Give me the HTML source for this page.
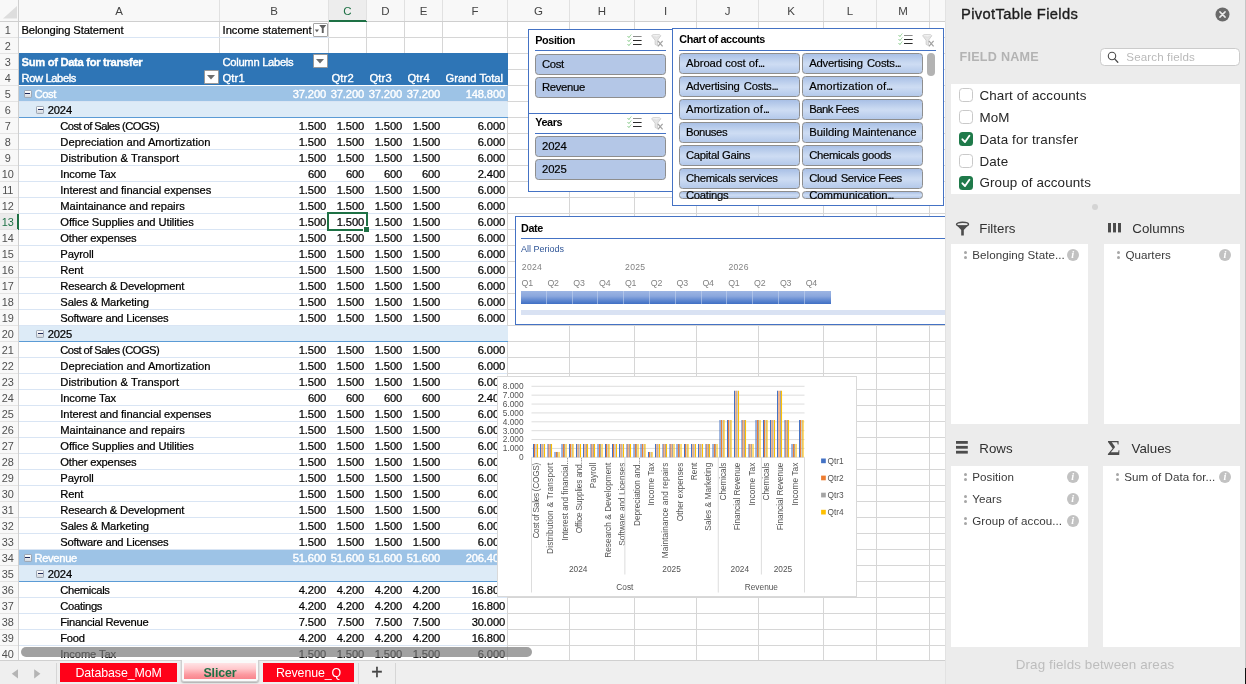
<!DOCTYPE html><html><head><meta charset="utf-8"><title>Slicer</title><style>
*{box-sizing:border-box;margin:0;padding:0}
html,body{width:1246px;height:684px;overflow:hidden;background:#fff}
body{position:relative;font-family:"Liberation Sans",sans-serif;}
.a{position:absolute}
.c{position:absolute;font-size:11.2px;line-height:16px;height:16px;white-space:nowrap;overflow:hidden;color:#000;padding-top:0px;-webkit-text-stroke:0.22px}
.r{text-align:right}
.w{color:#fff;-webkit-text-stroke:0.38px #fff}
.b{font-weight:bold}
.hl{position:absolute;height:1px;left:0}
.vl{position:absolute;width:1px;top:0}
.ch{position:absolute;top:0;height:21px;line-height:22px;font-size:11.5px;color:#444;text-align:center}
.rh{position:absolute;left:0;width:15.5px;height:16px;line-height:17px;font-size:10.9px;color:#4f4f4f;text-align:center;letter-spacing:-0.15px}
.sl{position:absolute;background:#fff;border:1px solid #4472c4}
.slt{position:absolute;font-weight:bold;font-size:10.8px;letter-spacing:-0.36px;line-height:14px;color:#000;white-space:nowrap}
.slb{position:absolute;height:20.5px;border:1px solid #8e8e8e;border-radius:3.5px;background:#b4c7e7;font-size:11.3px;line-height:18px;padding-left:6px;white-space:nowrap;overflow:hidden;color:#000;-webkit-text-stroke:0.18px}
.slg{background:linear-gradient(#a9c0e6 0%,#c9d9f1 45%,#cddcf3 55%,#b4c9ea 100%)}
.pt{position:absolute;white-space:nowrap}
.wb{position:absolute;background:#fff}
.it{position:absolute;font-size:11.6px;line-height:14px;color:#3a3a3a;white-space:nowrap;letter-spacing:0.05px}
.grip{position:absolute;width:3px;height:3px;border-radius:50%;background:#a6a6a6}
.info{position:absolute;width:12px;height:12px;border-radius:50%;background:#c2c2c2;color:#fff;font-family:"Liberation Serif",serif;font-style:italic;font-weight:bold;font-size:10.5px;line-height:12px;text-align:center}
.cb{position:absolute;left:959px;width:14px;height:14px;border-radius:3.5px;border:1px solid #c9c9c9;background:#fff}
.cbk{border:none;background:#1f7a4a}
.fl{position:absolute;left:979.5px;font-size:13.4px;line-height:16px;color:#262626;white-space:nowrap;letter-spacing:0.12px}
</style></head><body><div id="root" style="position:absolute;left:0;top:0;width:1246px;height:684px;will-change:transform;opacity:0.9999">
<div class="a" id="sheet" style="left:0;top:0;width:945px;height:660px;overflow:hidden;background:#fff">
<div class="hl" style="top:36.5px;width:945px;background:#d6d6d6"></div>
<div class="hl" style="top:52.5px;width:945px;background:#d6d6d6"></div>
<div class="hl" style="top:68.5px;width:945px;background:#d6d6d6"></div>
<div class="hl" style="top:84.5px;width:945px;background:#d6d6d6"></div>
<div class="hl" style="top:100.5px;width:945px;background:#d6d6d6"></div>
<div class="hl" style="top:116.5px;width:945px;background:#d6d6d6"></div>
<div class="hl" style="top:132.5px;width:945px;background:#d6d6d6"></div>
<div class="hl" style="top:148.5px;width:945px;background:#d6d6d6"></div>
<div class="hl" style="top:164.5px;width:945px;background:#d6d6d6"></div>
<div class="hl" style="top:180.5px;width:945px;background:#d6d6d6"></div>
<div class="hl" style="top:196.5px;width:945px;background:#d6d6d6"></div>
<div class="hl" style="top:212.5px;width:945px;background:#d6d6d6"></div>
<div class="hl" style="top:228.5px;width:945px;background:#d6d6d6"></div>
<div class="hl" style="top:244.5px;width:945px;background:#d6d6d6"></div>
<div class="hl" style="top:260.5px;width:945px;background:#d6d6d6"></div>
<div class="hl" style="top:276.5px;width:945px;background:#d6d6d6"></div>
<div class="hl" style="top:292.5px;width:945px;background:#d6d6d6"></div>
<div class="hl" style="top:308.5px;width:945px;background:#d6d6d6"></div>
<div class="hl" style="top:324.5px;width:945px;background:#d6d6d6"></div>
<div class="hl" style="top:340.5px;width:945px;background:#d6d6d6"></div>
<div class="hl" style="top:356.5px;width:945px;background:#d6d6d6"></div>
<div class="hl" style="top:372.5px;width:945px;background:#d6d6d6"></div>
<div class="hl" style="top:388.5px;width:945px;background:#d6d6d6"></div>
<div class="hl" style="top:404.5px;width:945px;background:#d6d6d6"></div>
<div class="hl" style="top:420.5px;width:945px;background:#d6d6d6"></div>
<div class="hl" style="top:436.5px;width:945px;background:#d6d6d6"></div>
<div class="hl" style="top:452.5px;width:945px;background:#d6d6d6"></div>
<div class="hl" style="top:468.5px;width:945px;background:#d6d6d6"></div>
<div class="hl" style="top:484.5px;width:945px;background:#d6d6d6"></div>
<div class="hl" style="top:500.5px;width:945px;background:#d6d6d6"></div>
<div class="hl" style="top:516.5px;width:945px;background:#d6d6d6"></div>
<div class="hl" style="top:532.5px;width:945px;background:#d6d6d6"></div>
<div class="hl" style="top:548.5px;width:945px;background:#d6d6d6"></div>
<div class="hl" style="top:564.5px;width:945px;background:#d6d6d6"></div>
<div class="hl" style="top:580.5px;width:945px;background:#d6d6d6"></div>
<div class="hl" style="top:596.5px;width:945px;background:#d6d6d6"></div>
<div class="hl" style="top:612.5px;width:945px;background:#d6d6d6"></div>
<div class="hl" style="top:628.5px;width:945px;background:#d6d6d6"></div>
<div class="hl" style="top:644.5px;width:945px;background:#d6d6d6"></div>
<div class="hl" style="top:660.5px;width:945px;background:#d6d6d6"></div>
<div class="hl" style="top:676.5px;width:945px;background:#d6d6d6"></div>
<div class="vl" style="left:219.0px;height:660px;background:#d6d6d6"></div>
<div class="vl" style="left:328.0px;height:660px;background:#d6d6d6"></div>
<div class="vl" style="left:366.0px;height:660px;background:#d6d6d6"></div>
<div class="vl" style="left:404.0px;height:660px;background:#d6d6d6"></div>
<div class="vl" style="left:442.0px;height:660px;background:#d6d6d6"></div>
<div class="vl" style="left:507.0px;height:660px;background:#d6d6d6"></div>
<div class="vl" style="left:569.0px;height:660px;background:#d6d6d6"></div>
<div class="vl" style="left:634.0px;height:660px;background:#d6d6d6"></div>
<div class="vl" style="left:696.0px;height:660px;background:#d6d6d6"></div>
<div class="vl" style="left:758.0px;height:660px;background:#d6d6d6"></div>
<div class="vl" style="left:823.0px;height:660px;background:#d6d6d6"></div>
<div class="vl" style="left:876.0px;height:660px;background:#d6d6d6"></div>
<div class="vl" style="left:929.0px;height:660px;background:#d6d6d6"></div>
<div class="vl" style="left:989.5px;height:660px;background:#d6d6d6"></div>
<div class="a" style="left:19.0px;top:53.5px;width:488.0px;height:606.5px;background:#fff"></div>
<div class="hl" style="left:19.0px;top:100.5px;width:488.0px;background:#d9e5f4"></div>
<div class="hl" style="left:19.0px;top:116.5px;width:488.0px;background:#d9e5f4"></div>
<div class="hl" style="left:19.0px;top:132.5px;width:488.0px;background:#d9e5f4"></div>
<div class="hl" style="left:19.0px;top:148.5px;width:488.0px;background:#d9e5f4"></div>
<div class="hl" style="left:19.0px;top:164.5px;width:488.0px;background:#d9e5f4"></div>
<div class="hl" style="left:19.0px;top:180.5px;width:488.0px;background:#d9e5f4"></div>
<div class="hl" style="left:19.0px;top:196.5px;width:488.0px;background:#d9e5f4"></div>
<div class="hl" style="left:19.0px;top:212.5px;width:488.0px;background:#d9e5f4"></div>
<div class="hl" style="left:19.0px;top:228.5px;width:488.0px;background:#d9e5f4"></div>
<div class="hl" style="left:19.0px;top:244.5px;width:488.0px;background:#d9e5f4"></div>
<div class="hl" style="left:19.0px;top:260.5px;width:488.0px;background:#d9e5f4"></div>
<div class="hl" style="left:19.0px;top:276.5px;width:488.0px;background:#d9e5f4"></div>
<div class="hl" style="left:19.0px;top:292.5px;width:488.0px;background:#d9e5f4"></div>
<div class="hl" style="left:19.0px;top:308.5px;width:488.0px;background:#d9e5f4"></div>
<div class="hl" style="left:19.0px;top:324.5px;width:488.0px;background:#d9e5f4"></div>
<div class="hl" style="left:19.0px;top:340.5px;width:488.0px;background:#d9e5f4"></div>
<div class="hl" style="left:19.0px;top:356.5px;width:488.0px;background:#d9e5f4"></div>
<div class="hl" style="left:19.0px;top:372.5px;width:488.0px;background:#d9e5f4"></div>
<div class="hl" style="left:19.0px;top:388.5px;width:488.0px;background:#d9e5f4"></div>
<div class="hl" style="left:19.0px;top:404.5px;width:488.0px;background:#d9e5f4"></div>
<div class="hl" style="left:19.0px;top:420.5px;width:488.0px;background:#d9e5f4"></div>
<div class="hl" style="left:19.0px;top:436.5px;width:488.0px;background:#d9e5f4"></div>
<div class="hl" style="left:19.0px;top:452.5px;width:488.0px;background:#d9e5f4"></div>
<div class="hl" style="left:19.0px;top:468.5px;width:488.0px;background:#d9e5f4"></div>
<div class="hl" style="left:19.0px;top:484.5px;width:488.0px;background:#d9e5f4"></div>
<div class="hl" style="left:19.0px;top:500.5px;width:488.0px;background:#d9e5f4"></div>
<div class="hl" style="left:19.0px;top:516.5px;width:488.0px;background:#d9e5f4"></div>
<div class="hl" style="left:19.0px;top:532.5px;width:488.0px;background:#d9e5f4"></div>
<div class="hl" style="left:19.0px;top:548.5px;width:488.0px;background:#d9e5f4"></div>
<div class="hl" style="left:19.0px;top:564.5px;width:488.0px;background:#d9e5f4"></div>
<div class="hl" style="left:19.0px;top:580.5px;width:488.0px;background:#d9e5f4"></div>
<div class="hl" style="left:19.0px;top:596.5px;width:488.0px;background:#d9e5f4"></div>
<div class="hl" style="left:19.0px;top:612.5px;width:488.0px;background:#d9e5f4"></div>
<div class="hl" style="left:19.0px;top:628.5px;width:488.0px;background:#d9e5f4"></div>
<div class="hl" style="left:19.0px;top:644.5px;width:488.0px;background:#d9e5f4"></div>
<div class="hl" style="left:19.0px;top:660.5px;width:488.0px;background:#d9e5f4"></div>
<div class="hl" style="left:19.0px;top:36.5px;width:309.5px;background:#d9e5f4"></div>
<div class="a" style="left:19.0px;top:53.0px;width:488.5px;height:32.3px;background:#2e75b6"></div>
<div class="a" style="left:19.0px;top:85.8px;width:488.5px;height:15.7px;background:#9dc3e6"></div>
<div class="a" style="left:19.0px;top:549.8px;width:488.5px;height:15.7px;background:#9dc3e6"></div>
<div class="a" style="left:19.0px;top:101.5px;width:488.5px;height:15.5px;background:#ddebf7"></div>
<div class="hl" style="left:19.0px;top:116.8px;width:488.5px;background:#5b9bd5"></div>
<div class="a" style="left:19.0px;top:325.5px;width:488.5px;height:15.5px;background:#ddebf7"></div>
<div class="hl" style="left:19.0px;top:340.8px;width:488.5px;background:#5b9bd5"></div>
<div class="a" style="left:19.0px;top:565.5px;width:488.5px;height:15.5px;background:#ddebf7"></div>
<div class="hl" style="left:19.0px;top:580.8px;width:488.5px;background:#5b9bd5"></div>
<div class="c " style="left:21.5px;top:21.5px;width:197.5px;letter-spacing:-0.10px;">Belonging Statement</div>
<div class="c " style="left:222.5px;top:21.5px;width:91.5px;letter-spacing:0.02px;">Income statement</div>
<div class="c w b" style="left:21.5px;top:53.5px;width:197.5px;letter-spacing:-0.3px;">Sum of Data for transfer</div>
<div class="c w" style="left:222.5px;top:53.5px;width:89.5px;letter-spacing:-0.29px;">Column Labels</div>
<div class="c w" style="left:21.5px;top:69.5px;width:181.5px;letter-spacing:-0.39px;">Row Labels</div>
<div class="c w" style="left:222.5px;top:69.5px;width:105.5px;letter-spacing:0.14px;">Qtr1</div>
<div class="c w" style="left:331.5px;top:69.5px;width:34.5px;letter-spacing:0.14px;">Qtr2</div>
<div class="c w" style="left:369.5px;top:69.5px;width:34.5px;letter-spacing:0.14px;">Qtr3</div>
<div class="c w" style="left:407.5px;top:69.5px;width:34.5px;letter-spacing:0.14px;">Qtr4</div>
<div class="c w" style="left:445.5px;top:69.5px;width:61.5px;letter-spacing:-0.02px;">Grand Total</div>
<div class="a" style="left:23.5px;top:89.7px;width:8px;height:8px;border:1px solid #9fa8b4;border-radius:1.2px;background:linear-gradient(#ffffff,#d4d9df)"><div class="a" style="left:0.7px;top:2.3px;width:4.6px;height:1.4px;background:#1f2a5a"></div></div>
<div class="c w" style="left:34.5px;top:85.5px;width:184.5px;letter-spacing:-0.40px;">Cost</div>
<div class="c r w" style="left:219.5px;top:85.5px;width:106.6px;letter-spacing:-0.14px;">37.200</div>
<div class="c r w" style="left:328.5px;top:85.5px;width:35.6px;letter-spacing:-0.14px;">37.200</div>
<div class="c r w" style="left:366.5px;top:85.5px;width:35.6px;letter-spacing:-0.14px;">37.200</div>
<div class="c r w" style="left:404.5px;top:85.5px;width:35.6px;letter-spacing:-0.14px;">37.200</div>
<div class="c r w" style="left:442.5px;top:85.5px;width:62.6px;letter-spacing:-0.14px;">148.800</div>
<div class="a" style="left:36.3px;top:105.5px;width:8px;height:8px;border:1px solid #9fa8b4;border-radius:1.2px;background:linear-gradient(#ffffff,#d4d9df)"><div class="a" style="left:0.7px;top:2.3px;width:4.6px;height:1.4px;background:#1f2a5a"></div></div>
<div class="c " style="left:47.7px;top:101.5px;width:171.3px;letter-spacing:-0.15px;">2024</div>
<div class="c " style="left:60.3px;top:117.5px;width:158.7px;letter-spacing:-0.56px;">Cost of Sales (COGS)</div>
<div class="c r " style="left:219.5px;top:117.5px;width:106.6px;letter-spacing:-0.13px;">1.500</div>
<div class="c r " style="left:328.5px;top:117.5px;width:35.6px;letter-spacing:-0.13px;">1.500</div>
<div class="c r " style="left:366.5px;top:117.5px;width:35.6px;letter-spacing:-0.13px;">1.500</div>
<div class="c r " style="left:404.5px;top:117.5px;width:35.6px;letter-spacing:-0.13px;">1.500</div>
<div class="c r " style="left:442.5px;top:117.5px;width:62.6px;letter-spacing:-0.13px;">6.000</div>
<div class="c " style="left:60.3px;top:341.5px;width:158.7px;letter-spacing:-0.56px;">Cost of Sales (COGS)</div>
<div class="c r " style="left:219.5px;top:341.5px;width:106.6px;letter-spacing:-0.13px;">1.500</div>
<div class="c r " style="left:328.5px;top:341.5px;width:35.6px;letter-spacing:-0.13px;">1.500</div>
<div class="c r " style="left:366.5px;top:341.5px;width:35.6px;letter-spacing:-0.13px;">1.500</div>
<div class="c r " style="left:404.5px;top:341.5px;width:35.6px;letter-spacing:-0.13px;">1.500</div>
<div class="c r " style="left:442.5px;top:341.5px;width:62.6px;letter-spacing:-0.13px;">6.000</div>
<div class="c " style="left:60.3px;top:133.5px;width:158.7px;letter-spacing:0.03px;">Depreciation and Amortization</div>
<div class="c r " style="left:219.5px;top:133.5px;width:106.6px;letter-spacing:-0.13px;">1.500</div>
<div class="c r " style="left:328.5px;top:133.5px;width:35.6px;letter-spacing:-0.13px;">1.500</div>
<div class="c r " style="left:366.5px;top:133.5px;width:35.6px;letter-spacing:-0.13px;">1.500</div>
<div class="c r " style="left:404.5px;top:133.5px;width:35.6px;letter-spacing:-0.13px;">1.500</div>
<div class="c r " style="left:442.5px;top:133.5px;width:62.6px;letter-spacing:-0.13px;">6.000</div>
<div class="c " style="left:60.3px;top:357.5px;width:158.7px;letter-spacing:0.03px;">Depreciation and Amortization</div>
<div class="c r " style="left:219.5px;top:357.5px;width:106.6px;letter-spacing:-0.13px;">1.500</div>
<div class="c r " style="left:328.5px;top:357.5px;width:35.6px;letter-spacing:-0.13px;">1.500</div>
<div class="c r " style="left:366.5px;top:357.5px;width:35.6px;letter-spacing:-0.13px;">1.500</div>
<div class="c r " style="left:404.5px;top:357.5px;width:35.6px;letter-spacing:-0.13px;">1.500</div>
<div class="c r " style="left:442.5px;top:357.5px;width:62.6px;letter-spacing:-0.13px;">6.000</div>
<div class="c " style="left:60.3px;top:149.5px;width:158.7px;letter-spacing:0.08px;">Distribution &amp; Transport</div>
<div class="c r " style="left:219.5px;top:149.5px;width:106.6px;letter-spacing:-0.13px;">1.500</div>
<div class="c r " style="left:328.5px;top:149.5px;width:35.6px;letter-spacing:-0.13px;">1.500</div>
<div class="c r " style="left:366.5px;top:149.5px;width:35.6px;letter-spacing:-0.13px;">1.500</div>
<div class="c r " style="left:404.5px;top:149.5px;width:35.6px;letter-spacing:-0.13px;">1.500</div>
<div class="c r " style="left:442.5px;top:149.5px;width:62.6px;letter-spacing:-0.13px;">6.000</div>
<div class="c " style="left:60.3px;top:373.5px;width:158.7px;letter-spacing:0.08px;">Distribution &amp; Transport</div>
<div class="c r " style="left:219.5px;top:373.5px;width:106.6px;letter-spacing:-0.13px;">1.500</div>
<div class="c r " style="left:328.5px;top:373.5px;width:35.6px;letter-spacing:-0.13px;">1.500</div>
<div class="c r " style="left:366.5px;top:373.5px;width:35.6px;letter-spacing:-0.13px;">1.500</div>
<div class="c r " style="left:404.5px;top:373.5px;width:35.6px;letter-spacing:-0.13px;">1.500</div>
<div class="c r " style="left:442.5px;top:373.5px;width:62.6px;letter-spacing:-0.13px;">6.000</div>
<div class="c " style="left:60.3px;top:165.5px;width:158.7px;letter-spacing:-0.13px;">Income Tax</div>
<div class="c r " style="left:219.5px;top:165.5px;width:106.6px;letter-spacing:-0.15px;">600</div>
<div class="c r " style="left:328.5px;top:165.5px;width:35.6px;letter-spacing:-0.15px;">600</div>
<div class="c r " style="left:366.5px;top:165.5px;width:35.6px;letter-spacing:-0.15px;">600</div>
<div class="c r " style="left:404.5px;top:165.5px;width:35.6px;letter-spacing:-0.15px;">600</div>
<div class="c r " style="left:442.5px;top:165.5px;width:62.6px;letter-spacing:-0.13px;">2.400</div>
<div class="c " style="left:60.3px;top:389.5px;width:158.7px;letter-spacing:-0.13px;">Income Tax</div>
<div class="c r " style="left:219.5px;top:389.5px;width:106.6px;letter-spacing:-0.15px;">600</div>
<div class="c r " style="left:328.5px;top:389.5px;width:35.6px;letter-spacing:-0.15px;">600</div>
<div class="c r " style="left:366.5px;top:389.5px;width:35.6px;letter-spacing:-0.15px;">600</div>
<div class="c r " style="left:404.5px;top:389.5px;width:35.6px;letter-spacing:-0.15px;">600</div>
<div class="c r " style="left:442.5px;top:389.5px;width:62.6px;letter-spacing:-0.13px;">2.400</div>
<div class="c " style="left:60.3px;top:181.5px;width:158.7px;letter-spacing:-0.11px;">Interest and financial expenses</div>
<div class="c r " style="left:219.5px;top:181.5px;width:106.6px;letter-spacing:-0.13px;">1.500</div>
<div class="c r " style="left:328.5px;top:181.5px;width:35.6px;letter-spacing:-0.13px;">1.500</div>
<div class="c r " style="left:366.5px;top:181.5px;width:35.6px;letter-spacing:-0.13px;">1.500</div>
<div class="c r " style="left:404.5px;top:181.5px;width:35.6px;letter-spacing:-0.13px;">1.500</div>
<div class="c r " style="left:442.5px;top:181.5px;width:62.6px;letter-spacing:-0.13px;">6.000</div>
<div class="c " style="left:60.3px;top:405.5px;width:158.7px;letter-spacing:-0.11px;">Interest and financial expenses</div>
<div class="c r " style="left:219.5px;top:405.5px;width:106.6px;letter-spacing:-0.13px;">1.500</div>
<div class="c r " style="left:328.5px;top:405.5px;width:35.6px;letter-spacing:-0.13px;">1.500</div>
<div class="c r " style="left:366.5px;top:405.5px;width:35.6px;letter-spacing:-0.13px;">1.500</div>
<div class="c r " style="left:404.5px;top:405.5px;width:35.6px;letter-spacing:-0.13px;">1.500</div>
<div class="c r " style="left:442.5px;top:405.5px;width:62.6px;letter-spacing:-0.13px;">6.000</div>
<div class="c " style="left:60.3px;top:197.5px;width:158.7px;letter-spacing:-0.05px;">Maintainance and repairs</div>
<div class="c r " style="left:219.5px;top:197.5px;width:106.6px;letter-spacing:-0.13px;">1.500</div>
<div class="c r " style="left:328.5px;top:197.5px;width:35.6px;letter-spacing:-0.13px;">1.500</div>
<div class="c r " style="left:366.5px;top:197.5px;width:35.6px;letter-spacing:-0.13px;">1.500</div>
<div class="c r " style="left:404.5px;top:197.5px;width:35.6px;letter-spacing:-0.13px;">1.500</div>
<div class="c r " style="left:442.5px;top:197.5px;width:62.6px;letter-spacing:-0.13px;">6.000</div>
<div class="c " style="left:60.3px;top:421.5px;width:158.7px;letter-spacing:-0.05px;">Maintainance and repairs</div>
<div class="c r " style="left:219.5px;top:421.5px;width:106.6px;letter-spacing:-0.13px;">1.500</div>
<div class="c r " style="left:328.5px;top:421.5px;width:35.6px;letter-spacing:-0.13px;">1.500</div>
<div class="c r " style="left:366.5px;top:421.5px;width:35.6px;letter-spacing:-0.13px;">1.500</div>
<div class="c r " style="left:404.5px;top:421.5px;width:35.6px;letter-spacing:-0.13px;">1.500</div>
<div class="c r " style="left:442.5px;top:421.5px;width:62.6px;letter-spacing:-0.13px;">6.000</div>
<div class="c " style="left:60.3px;top:213.5px;width:158.7px;letter-spacing:-0.09px;">Office Supplies and Utilities</div>
<div class="c r " style="left:219.5px;top:213.5px;width:106.6px;letter-spacing:-0.13px;">1.500</div>
<div class="c r " style="left:328.5px;top:213.5px;width:35.6px;letter-spacing:-0.13px;">1.500</div>
<div class="c r " style="left:366.5px;top:213.5px;width:35.6px;letter-spacing:-0.13px;">1.500</div>
<div class="c r " style="left:404.5px;top:213.5px;width:35.6px;letter-spacing:-0.13px;">1.500</div>
<div class="c r " style="left:442.5px;top:213.5px;width:62.6px;letter-spacing:-0.13px;">6.000</div>
<div class="c " style="left:60.3px;top:437.5px;width:158.7px;letter-spacing:-0.09px;">Office Supplies and Utilities</div>
<div class="c r " style="left:219.5px;top:437.5px;width:106.6px;letter-spacing:-0.13px;">1.500</div>
<div class="c r " style="left:328.5px;top:437.5px;width:35.6px;letter-spacing:-0.13px;">1.500</div>
<div class="c r " style="left:366.5px;top:437.5px;width:35.6px;letter-spacing:-0.13px;">1.500</div>
<div class="c r " style="left:404.5px;top:437.5px;width:35.6px;letter-spacing:-0.13px;">1.500</div>
<div class="c r " style="left:442.5px;top:437.5px;width:62.6px;letter-spacing:-0.13px;">6.000</div>
<div class="c " style="left:60.3px;top:229.5px;width:158.7px;letter-spacing:-0.20px;">Other expenses</div>
<div class="c r " style="left:219.5px;top:229.5px;width:106.6px;letter-spacing:-0.13px;">1.500</div>
<div class="c r " style="left:328.5px;top:229.5px;width:35.6px;letter-spacing:-0.13px;">1.500</div>
<div class="c r " style="left:366.5px;top:229.5px;width:35.6px;letter-spacing:-0.13px;">1.500</div>
<div class="c r " style="left:404.5px;top:229.5px;width:35.6px;letter-spacing:-0.13px;">1.500</div>
<div class="c r " style="left:442.5px;top:229.5px;width:62.6px;letter-spacing:-0.13px;">6.000</div>
<div class="c " style="left:60.3px;top:453.5px;width:158.7px;letter-spacing:-0.20px;">Other expenses</div>
<div class="c r " style="left:219.5px;top:453.5px;width:106.6px;letter-spacing:-0.13px;">1.500</div>
<div class="c r " style="left:328.5px;top:453.5px;width:35.6px;letter-spacing:-0.13px;">1.500</div>
<div class="c r " style="left:366.5px;top:453.5px;width:35.6px;letter-spacing:-0.13px;">1.500</div>
<div class="c r " style="left:404.5px;top:453.5px;width:35.6px;letter-spacing:-0.13px;">1.500</div>
<div class="c r " style="left:442.5px;top:453.5px;width:62.6px;letter-spacing:-0.13px;">6.000</div>
<div class="c " style="left:60.3px;top:245.5px;width:158.7px;letter-spacing:-0.12px;">Payroll</div>
<div class="c r " style="left:219.5px;top:245.5px;width:106.6px;letter-spacing:-0.13px;">1.500</div>
<div class="c r " style="left:328.5px;top:245.5px;width:35.6px;letter-spacing:-0.13px;">1.500</div>
<div class="c r " style="left:366.5px;top:245.5px;width:35.6px;letter-spacing:-0.13px;">1.500</div>
<div class="c r " style="left:404.5px;top:245.5px;width:35.6px;letter-spacing:-0.13px;">1.500</div>
<div class="c r " style="left:442.5px;top:245.5px;width:62.6px;letter-spacing:-0.13px;">6.000</div>
<div class="c " style="left:60.3px;top:469.5px;width:158.7px;letter-spacing:-0.12px;">Payroll</div>
<div class="c r " style="left:219.5px;top:469.5px;width:106.6px;letter-spacing:-0.13px;">1.500</div>
<div class="c r " style="left:328.5px;top:469.5px;width:35.6px;letter-spacing:-0.13px;">1.500</div>
<div class="c r " style="left:366.5px;top:469.5px;width:35.6px;letter-spacing:-0.13px;">1.500</div>
<div class="c r " style="left:404.5px;top:469.5px;width:35.6px;letter-spacing:-0.13px;">1.500</div>
<div class="c r " style="left:442.5px;top:469.5px;width:62.6px;letter-spacing:-0.13px;">6.000</div>
<div class="c " style="left:60.3px;top:261.5px;width:158.7px;letter-spacing:-0.21px;">Rent</div>
<div class="c r " style="left:219.5px;top:261.5px;width:106.6px;letter-spacing:-0.13px;">1.500</div>
<div class="c r " style="left:328.5px;top:261.5px;width:35.6px;letter-spacing:-0.13px;">1.500</div>
<div class="c r " style="left:366.5px;top:261.5px;width:35.6px;letter-spacing:-0.13px;">1.500</div>
<div class="c r " style="left:404.5px;top:261.5px;width:35.6px;letter-spacing:-0.13px;">1.500</div>
<div class="c r " style="left:442.5px;top:261.5px;width:62.6px;letter-spacing:-0.13px;">6.000</div>
<div class="c " style="left:60.3px;top:485.5px;width:158.7px;letter-spacing:-0.21px;">Rent</div>
<div class="c r " style="left:219.5px;top:485.5px;width:106.6px;letter-spacing:-0.13px;">1.500</div>
<div class="c r " style="left:328.5px;top:485.5px;width:35.6px;letter-spacing:-0.13px;">1.500</div>
<div class="c r " style="left:366.5px;top:485.5px;width:35.6px;letter-spacing:-0.13px;">1.500</div>
<div class="c r " style="left:404.5px;top:485.5px;width:35.6px;letter-spacing:-0.13px;">1.500</div>
<div class="c r " style="left:442.5px;top:485.5px;width:62.6px;letter-spacing:-0.13px;">6.000</div>
<div class="c " style="left:60.3px;top:277.5px;width:158.7px;letter-spacing:-0.16px;">Research &amp; Development</div>
<div class="c r " style="left:219.5px;top:277.5px;width:106.6px;letter-spacing:-0.13px;">1.500</div>
<div class="c r " style="left:328.5px;top:277.5px;width:35.6px;letter-spacing:-0.13px;">1.500</div>
<div class="c r " style="left:366.5px;top:277.5px;width:35.6px;letter-spacing:-0.13px;">1.500</div>
<div class="c r " style="left:404.5px;top:277.5px;width:35.6px;letter-spacing:-0.13px;">1.500</div>
<div class="c r " style="left:442.5px;top:277.5px;width:62.6px;letter-spacing:-0.13px;">6.000</div>
<div class="c " style="left:60.3px;top:501.5px;width:158.7px;letter-spacing:-0.16px;">Research &amp; Development</div>
<div class="c r " style="left:219.5px;top:501.5px;width:106.6px;letter-spacing:-0.13px;">1.500</div>
<div class="c r " style="left:328.5px;top:501.5px;width:35.6px;letter-spacing:-0.13px;">1.500</div>
<div class="c r " style="left:366.5px;top:501.5px;width:35.6px;letter-spacing:-0.13px;">1.500</div>
<div class="c r " style="left:404.5px;top:501.5px;width:35.6px;letter-spacing:-0.13px;">1.500</div>
<div class="c r " style="left:442.5px;top:501.5px;width:62.6px;letter-spacing:-0.13px;">6.000</div>
<div class="c " style="left:60.3px;top:293.5px;width:158.7px;letter-spacing:-0.13px;">Sales &amp; Marketing</div>
<div class="c r " style="left:219.5px;top:293.5px;width:106.6px;letter-spacing:-0.13px;">1.500</div>
<div class="c r " style="left:328.5px;top:293.5px;width:35.6px;letter-spacing:-0.13px;">1.500</div>
<div class="c r " style="left:366.5px;top:293.5px;width:35.6px;letter-spacing:-0.13px;">1.500</div>
<div class="c r " style="left:404.5px;top:293.5px;width:35.6px;letter-spacing:-0.13px;">1.500</div>
<div class="c r " style="left:442.5px;top:293.5px;width:62.6px;letter-spacing:-0.13px;">6.000</div>
<div class="c " style="left:60.3px;top:517.5px;width:158.7px;letter-spacing:-0.13px;">Sales &amp; Marketing</div>
<div class="c r " style="left:219.5px;top:517.5px;width:106.6px;letter-spacing:-0.13px;">1.500</div>
<div class="c r " style="left:328.5px;top:517.5px;width:35.6px;letter-spacing:-0.13px;">1.500</div>
<div class="c r " style="left:366.5px;top:517.5px;width:35.6px;letter-spacing:-0.13px;">1.500</div>
<div class="c r " style="left:404.5px;top:517.5px;width:35.6px;letter-spacing:-0.13px;">1.500</div>
<div class="c r " style="left:442.5px;top:517.5px;width:62.6px;letter-spacing:-0.13px;">6.000</div>
<div class="c " style="left:60.3px;top:309.5px;width:158.7px;letter-spacing:-0.24px;">Software and Licenses</div>
<div class="c r " style="left:219.5px;top:309.5px;width:106.6px;letter-spacing:-0.13px;">1.500</div>
<div class="c r " style="left:328.5px;top:309.5px;width:35.6px;letter-spacing:-0.13px;">1.500</div>
<div class="c r " style="left:366.5px;top:309.5px;width:35.6px;letter-spacing:-0.13px;">1.500</div>
<div class="c r " style="left:404.5px;top:309.5px;width:35.6px;letter-spacing:-0.13px;">1.500</div>
<div class="c r " style="left:442.5px;top:309.5px;width:62.6px;letter-spacing:-0.13px;">6.000</div>
<div class="c " style="left:60.3px;top:533.5px;width:158.7px;letter-spacing:-0.24px;">Software and Licenses</div>
<div class="c r " style="left:219.5px;top:533.5px;width:106.6px;letter-spacing:-0.13px;">1.500</div>
<div class="c r " style="left:328.5px;top:533.5px;width:35.6px;letter-spacing:-0.13px;">1.500</div>
<div class="c r " style="left:366.5px;top:533.5px;width:35.6px;letter-spacing:-0.13px;">1.500</div>
<div class="c r " style="left:404.5px;top:533.5px;width:35.6px;letter-spacing:-0.13px;">1.500</div>
<div class="c r " style="left:442.5px;top:533.5px;width:62.6px;letter-spacing:-0.13px;">6.000</div>
<div class="a" style="left:36.3px;top:329.5px;width:8px;height:8px;border:1px solid #9fa8b4;border-radius:1.2px;background:linear-gradient(#ffffff,#d4d9df)"><div class="a" style="left:0.7px;top:2.3px;width:4.6px;height:1.4px;background:#1f2a5a"></div></div>
<div class="c " style="left:47.7px;top:325.5px;width:171.3px;letter-spacing:-0.15px;">2025</div>
<div class="a" style="left:23.5px;top:553.7px;width:8px;height:8px;border:1px solid #9fa8b4;border-radius:1.2px;background:linear-gradient(#ffffff,#d4d9df)"><div class="a" style="left:0.7px;top:2.3px;width:4.6px;height:1.4px;background:#1f2a5a"></div></div>
<div class="c w" style="left:34.5px;top:549.5px;width:184.5px;letter-spacing:-0.34px;">Revenue</div>
<div class="c r w" style="left:219.5px;top:549.5px;width:106.6px;letter-spacing:-0.14px;">51.600</div>
<div class="c r w" style="left:328.5px;top:549.5px;width:35.6px;letter-spacing:-0.14px;">51.600</div>
<div class="c r w" style="left:366.5px;top:549.5px;width:35.6px;letter-spacing:-0.14px;">51.600</div>
<div class="c r w" style="left:404.5px;top:549.5px;width:35.6px;letter-spacing:-0.14px;">51.600</div>
<div class="c r w" style="left:442.5px;top:549.5px;width:62.6px;letter-spacing:-0.14px;">206.400</div>
<div class="a" style="left:36.3px;top:569.5px;width:8px;height:8px;border:1px solid #9fa8b4;border-radius:1.2px;background:linear-gradient(#ffffff,#d4d9df)"><div class="a" style="left:0.7px;top:2.3px;width:4.6px;height:1.4px;background:#1f2a5a"></div></div>
<div class="c " style="left:47.7px;top:565.5px;width:171.3px;letter-spacing:-0.15px;">2024</div>
<div class="c " style="left:60.3px;top:581.5px;width:158.7px;letter-spacing:-0.33px;">Chemicals</div>
<div class="c r " style="left:219.5px;top:581.5px;width:106.6px;letter-spacing:-0.13px;">4.200</div>
<div class="c r " style="left:328.5px;top:581.5px;width:35.6px;letter-spacing:-0.13px;">4.200</div>
<div class="c r " style="left:366.5px;top:581.5px;width:35.6px;letter-spacing:-0.13px;">4.200</div>
<div class="c r " style="left:404.5px;top:581.5px;width:35.6px;letter-spacing:-0.13px;">4.200</div>
<div class="c r " style="left:442.5px;top:581.5px;width:62.6px;letter-spacing:-0.14px;">16.800</div>
<div class="c " style="left:60.3px;top:597.5px;width:158.7px;letter-spacing:-0.29px;">Coatings</div>
<div class="c r " style="left:219.5px;top:597.5px;width:106.6px;letter-spacing:-0.13px;">4.200</div>
<div class="c r " style="left:328.5px;top:597.5px;width:35.6px;letter-spacing:-0.13px;">4.200</div>
<div class="c r " style="left:366.5px;top:597.5px;width:35.6px;letter-spacing:-0.13px;">4.200</div>
<div class="c r " style="left:404.5px;top:597.5px;width:35.6px;letter-spacing:-0.13px;">4.200</div>
<div class="c r " style="left:442.5px;top:597.5px;width:62.6px;letter-spacing:-0.14px;">16.800</div>
<div class="c " style="left:60.3px;top:613.5px;width:158.7px;letter-spacing:-0.27px;">Financial Revenue</div>
<div class="c r " style="left:219.5px;top:613.5px;width:106.6px;letter-spacing:-0.13px;">7.500</div>
<div class="c r " style="left:328.5px;top:613.5px;width:35.6px;letter-spacing:-0.13px;">7.500</div>
<div class="c r " style="left:366.5px;top:613.5px;width:35.6px;letter-spacing:-0.13px;">7.500</div>
<div class="c r " style="left:404.5px;top:613.5px;width:35.6px;letter-spacing:-0.13px;">7.500</div>
<div class="c r " style="left:442.5px;top:613.5px;width:62.6px;letter-spacing:-0.14px;">30.000</div>
<div class="c " style="left:60.3px;top:629.5px;width:158.7px;letter-spacing:-0.26px;">Food</div>
<div class="c r " style="left:219.5px;top:629.5px;width:106.6px;letter-spacing:-0.13px;">4.200</div>
<div class="c r " style="left:328.5px;top:629.5px;width:35.6px;letter-spacing:-0.13px;">4.200</div>
<div class="c r " style="left:366.5px;top:629.5px;width:35.6px;letter-spacing:-0.13px;">4.200</div>
<div class="c r " style="left:404.5px;top:629.5px;width:35.6px;letter-spacing:-0.13px;">4.200</div>
<div class="c r " style="left:442.5px;top:629.5px;width:62.6px;letter-spacing:-0.14px;">16.800</div>
<div class="c " style="left:60.3px;top:645.5px;width:158.7px;letter-spacing:-0.13px;">Income Tax</div>
<div class="c r " style="left:219.5px;top:645.5px;width:106.6px;letter-spacing:-0.13px;">1.500</div>
<div class="c r " style="left:328.5px;top:645.5px;width:35.6px;letter-spacing:-0.13px;">1.500</div>
<div class="c r " style="left:366.5px;top:645.5px;width:35.6px;letter-spacing:-0.13px;">1.500</div>
<div class="c r " style="left:404.5px;top:645.5px;width:35.6px;letter-spacing:-0.13px;">1.500</div>
<div class="c r " style="left:442.5px;top:645.5px;width:62.6px;letter-spacing:-0.13px;">6.000</div>
<div class="a" style="left:312.5px;top:53.8px;width:15px;height:14.5px;background:#fff;border:1px solid #9a9a9a;border-radius:1px"><svg class="a" style="left:2.5px;top:4px" width="8" height="5" viewBox="0 0 8 5"><path d="M0 0H8L4 4.6Z" fill="#6e6e6e"/></svg></div>
<div class="a" style="left:203.5px;top:69.7px;width:15px;height:14.5px;background:#fff;border:1px solid #9a9a9a;border-radius:1px"><svg class="a" style="left:2.5px;top:4px" width="8" height="5" viewBox="0 0 8 5"><path d="M0 0H8L4 4.6Z" fill="#6e6e6e"/></svg></div>
<div class="a" style="left:312.5px;top:23px;width:15.5px;height:13.5px;background:#fff;border:1px solid #a6a6a6;border-radius:1px"><svg class="a" style="left:0;top:0" width="14" height="12" viewBox="0 0 14 12"><path d="M0.8 5.6H5L2.9 8.2Z" fill="#5f5f5f"/><path d="M5.2 0.9H12.3L9.7 4.2V8.9H7.8V4.2Z" fill="#5f5f5f"/></svg></div>
<div class="a" style="left:327px;top:212.0px;width:40.5px;height:19px;border:2px solid #1e7145"></div>
<div class="a" style="left:362.8px;top:225.7px;width:6px;height:6px;background:#1e7145;border:1px solid #fff;border-right:none;border-bottom:none"></div>
<div class="a" style="left:0;top:0;width:945px;height:21.5px;background:#f8f8f8;border-bottom:1px solid #cfcfcf"></div>
<div class="a" style="left:0;top:0;width:18.5px;height:21.5px;background:#f8f8f8;border-right:1px solid #cfcfcf;border-bottom:1px solid #cfcfcf"><svg class="a" style="left:2.5px;top:6.3px" width="14" height="12.5" viewBox="0 0 14 12.5"><path d="M14 0V12.5H0Z" fill="#dddddd"/></svg></div>
<div class="ch" style="left:18.5px;width:201.0px">A</div>
<div class="a" style="left:219.0px;top:0;width:1px;height:21px;background:#e1e1e1"></div>
<div class="ch" style="left:219.5px;width:109.0px">B</div>
<div class="a" style="left:328.0px;top:0;width:1px;height:21px;background:#e1e1e1"></div>
<div class="a" style="left:328.5px;top:0;width:38.0px;height:21.5px;background:#ededed;border-bottom:2px solid #1e7145"></div>
<div class="ch" style="left:328.5px;width:38.0px;color:#1e7145">C</div>
<div class="a" style="left:366.0px;top:0;width:1px;height:21px;background:#e1e1e1"></div>
<div class="ch" style="left:366.5px;width:38.0px">D</div>
<div class="a" style="left:404.0px;top:0;width:1px;height:21px;background:#e1e1e1"></div>
<div class="ch" style="left:404.5px;width:38.0px">E</div>
<div class="a" style="left:442.0px;top:0;width:1px;height:21px;background:#e1e1e1"></div>
<div class="ch" style="left:442.5px;width:65.0px">F</div>
<div class="a" style="left:507.0px;top:0;width:1px;height:21px;background:#e1e1e1"></div>
<div class="ch" style="left:507.5px;width:62.0px">G</div>
<div class="a" style="left:569.0px;top:0;width:1px;height:21px;background:#e1e1e1"></div>
<div class="ch" style="left:569.5px;width:65.0px">H</div>
<div class="a" style="left:634.0px;top:0;width:1px;height:21px;background:#e1e1e1"></div>
<div class="ch" style="left:634.5px;width:62.0px">I</div>
<div class="a" style="left:696.0px;top:0;width:1px;height:21px;background:#e1e1e1"></div>
<div class="ch" style="left:696.5px;width:62.0px">J</div>
<div class="a" style="left:758.0px;top:0;width:1px;height:21px;background:#e1e1e1"></div>
<div class="ch" style="left:758.5px;width:65.0px">K</div>
<div class="a" style="left:823.0px;top:0;width:1px;height:21px;background:#e1e1e1"></div>
<div class="ch" style="left:823.5px;width:53.0px">L</div>
<div class="a" style="left:876.0px;top:0;width:1px;height:21px;background:#e1e1e1"></div>
<div class="ch" style="left:876.5px;width:53.0px">M</div>
<div class="a" style="left:929.0px;top:0;width:1px;height:21px;background:#e1e1e1"></div>
<div class="ch" style="left:929.5px;width:60.5px">N</div>
<div class="a" style="left:989.5px;top:0;width:1px;height:21px;background:#e1e1e1"></div>
<div class="a" style="left:0;top:21.5px;width:18.5px;height:640px;background:#f8f8f8;border-right:1px solid #cfcfcf"></div>
<div class="rh" style="top:21.5px">1</div>
<div class="a" style="left:0;top:36.8px;width:18px;height:1px;background:#e3e3e3"></div>
<div class="rh" style="top:37.5px">2</div>
<div class="a" style="left:0;top:52.8px;width:18px;height:1px;background:#e3e3e3"></div>
<div class="rh" style="top:53.5px">3</div>
<div class="a" style="left:0;top:68.8px;width:18px;height:1px;background:#e3e3e3"></div>
<div class="rh" style="top:69.5px">4</div>
<div class="a" style="left:0;top:84.8px;width:18px;height:1px;background:#e3e3e3"></div>
<div class="rh" style="top:85.5px">5</div>
<div class="a" style="left:0;top:100.8px;width:18px;height:1px;background:#e3e3e3"></div>
<div class="rh" style="top:101.5px">6</div>
<div class="a" style="left:0;top:116.8px;width:18px;height:1px;background:#e3e3e3"></div>
<div class="rh" style="top:117.5px">7</div>
<div class="a" style="left:0;top:132.8px;width:18px;height:1px;background:#e3e3e3"></div>
<div class="rh" style="top:133.5px">8</div>
<div class="a" style="left:0;top:148.8px;width:18px;height:1px;background:#e3e3e3"></div>
<div class="rh" style="top:149.5px">9</div>
<div class="a" style="left:0;top:164.8px;width:18px;height:1px;background:#e3e3e3"></div>
<div class="rh" style="top:165.5px">10</div>
<div class="a" style="left:0;top:180.8px;width:18px;height:1px;background:#e3e3e3"></div>
<div class="rh" style="top:181.5px">11</div>
<div class="a" style="left:0;top:196.8px;width:18px;height:1px;background:#e3e3e3"></div>
<div class="rh" style="top:197.5px">12</div>
<div class="a" style="left:0;top:212.8px;width:18px;height:1px;background:#e3e3e3"></div>
<div class="a" style="left:0;top:213.5px;width:18.5px;height:16px;background:#ebebeb;border-right:2px solid #1e7145"></div>
<div class="rh" style="top:213.5px;color:#1e7145">13</div>
<div class="a" style="left:0;top:228.8px;width:18px;height:1px;background:#e3e3e3"></div>
<div class="rh" style="top:229.5px">14</div>
<div class="a" style="left:0;top:244.8px;width:18px;height:1px;background:#e3e3e3"></div>
<div class="rh" style="top:245.5px">15</div>
<div class="a" style="left:0;top:260.8px;width:18px;height:1px;background:#e3e3e3"></div>
<div class="rh" style="top:261.5px">16</div>
<div class="a" style="left:0;top:276.8px;width:18px;height:1px;background:#e3e3e3"></div>
<div class="rh" style="top:277.5px">17</div>
<div class="a" style="left:0;top:292.8px;width:18px;height:1px;background:#e3e3e3"></div>
<div class="rh" style="top:293.5px">18</div>
<div class="a" style="left:0;top:308.8px;width:18px;height:1px;background:#e3e3e3"></div>
<div class="rh" style="top:309.5px">19</div>
<div class="a" style="left:0;top:324.8px;width:18px;height:1px;background:#e3e3e3"></div>
<div class="rh" style="top:325.5px">20</div>
<div class="a" style="left:0;top:340.8px;width:18px;height:1px;background:#e3e3e3"></div>
<div class="rh" style="top:341.5px">21</div>
<div class="a" style="left:0;top:356.8px;width:18px;height:1px;background:#e3e3e3"></div>
<div class="rh" style="top:357.5px">22</div>
<div class="a" style="left:0;top:372.8px;width:18px;height:1px;background:#e3e3e3"></div>
<div class="rh" style="top:373.5px">23</div>
<div class="a" style="left:0;top:388.8px;width:18px;height:1px;background:#e3e3e3"></div>
<div class="rh" style="top:389.5px">24</div>
<div class="a" style="left:0;top:404.8px;width:18px;height:1px;background:#e3e3e3"></div>
<div class="rh" style="top:405.5px">25</div>
<div class="a" style="left:0;top:420.8px;width:18px;height:1px;background:#e3e3e3"></div>
<div class="rh" style="top:421.5px">26</div>
<div class="a" style="left:0;top:436.8px;width:18px;height:1px;background:#e3e3e3"></div>
<div class="rh" style="top:437.5px">27</div>
<div class="a" style="left:0;top:452.8px;width:18px;height:1px;background:#e3e3e3"></div>
<div class="rh" style="top:453.5px">28</div>
<div class="a" style="left:0;top:468.8px;width:18px;height:1px;background:#e3e3e3"></div>
<div class="rh" style="top:469.5px">29</div>
<div class="a" style="left:0;top:484.8px;width:18px;height:1px;background:#e3e3e3"></div>
<div class="rh" style="top:485.5px">30</div>
<div class="a" style="left:0;top:500.8px;width:18px;height:1px;background:#e3e3e3"></div>
<div class="rh" style="top:501.5px">31</div>
<div class="a" style="left:0;top:516.8px;width:18px;height:1px;background:#e3e3e3"></div>
<div class="rh" style="top:517.5px">32</div>
<div class="a" style="left:0;top:532.8px;width:18px;height:1px;background:#e3e3e3"></div>
<div class="rh" style="top:533.5px">33</div>
<div class="a" style="left:0;top:548.8px;width:18px;height:1px;background:#e3e3e3"></div>
<div class="rh" style="top:549.5px">34</div>
<div class="a" style="left:0;top:564.8px;width:18px;height:1px;background:#e3e3e3"></div>
<div class="rh" style="top:565.5px">35</div>
<div class="a" style="left:0;top:580.8px;width:18px;height:1px;background:#e3e3e3"></div>
<div class="rh" style="top:581.5px">36</div>
<div class="a" style="left:0;top:596.8px;width:18px;height:1px;background:#e3e3e3"></div>
<div class="rh" style="top:597.5px">37</div>
<div class="a" style="left:0;top:612.8px;width:18px;height:1px;background:#e3e3e3"></div>
<div class="rh" style="top:613.5px">38</div>
<div class="a" style="left:0;top:628.8px;width:18px;height:1px;background:#e3e3e3"></div>
<div class="rh" style="top:629.5px">39</div>
<div class="a" style="left:0;top:644.8px;width:18px;height:1px;background:#e3e3e3"></div>
<div class="rh" style="top:645.5px">40</div>
<div class="a" style="left:0;top:660.8px;width:18px;height:1px;background:#e3e3e3"></div>
<div class="sl" style="left:528px;top:29px;width:145px;height:84.5px"></div>
<div class="slt" style="left:535.2px;top:32.7px">Position</div>
<div class="a" style="left:535px;top:50px;width:131px;height:1px;background:#4472c4"></div>
<svg class="a" style="left:626.5px;top:33px" width="16" height="14" viewBox="0 0 16 14"><path d="M0.6 3.1L1.9 4.5L4.3 1.5" fill="none" stroke="#4caf50" stroke-width="0.9" stroke-dasharray="1 0.5"/><rect x="6" y="3.0" width="8.6" height="1" fill="#8a8a8a"/><path d="M0.6 7.1L1.9 8.5L4.3 5.5" fill="none" stroke="#4caf50" stroke-width="0.9" stroke-dasharray="1 0.5"/><rect x="6" y="7.0" width="8.6" height="1" fill="#2b2b2b"/><path d="M0.6 11.1L1.9 12.5L4.3 9.5" fill="none" stroke="#4caf50" stroke-width="0.9" stroke-dasharray="1 0.5"/><rect x="6" y="11.0" width="8.6" height="1" fill="#2b2b2b"/></svg>
<svg class="a" style="left:651.3px;top:34.300000000000004px" width="14" height="14" viewBox="0 0 14 14"><path d="M0.6 1.8C0.6 0.2 9.8 0.2 9.8 1.8L6.5 6.2V11.6L4.1 10.4V6.2Z" fill="#e6e6e6" stroke="#c9c9c9" stroke-width="0.8"/><ellipse cx="5.2" cy="1.8" rx="4.2" ry="1.1" fill="#f6f6f6" stroke="#cfcfcf" stroke-width="0.5"/><path d="M6.9 6.9L11.6 12.4M11.6 6.9L6.9 12.4" stroke="#a2a2a2" stroke-width="1.25" fill="none"/></svg>
<div class="slb " style="left:535px;top:54.3px;width:131px;letter-spacing:-0.40px;">Cost</div>
<div class="slb " style="left:535px;top:77.2px;width:131px;letter-spacing:-0.34px;">Revenue</div>
<div class="sl" style="left:528px;top:112.5px;width:145px;height:79.80000000000001px"></div>
<div class="slt" style="left:535.2px;top:115.2px">Years</div>
<div class="a" style="left:535px;top:132.5px;width:131px;height:1px;background:#4472c4"></div>
<svg class="a" style="left:626.5px;top:115px" width="16" height="14" viewBox="0 0 16 14"><path d="M0.6 3.1L1.9 4.5L4.3 1.5" fill="none" stroke="#4caf50" stroke-width="0.9" stroke-dasharray="1 0.5"/><rect x="6" y="3.0" width="8.6" height="1" fill="#8a8a8a"/><path d="M0.6 7.1L1.9 8.5L4.3 5.5" fill="none" stroke="#4caf50" stroke-width="0.9" stroke-dasharray="1 0.5"/><rect x="6" y="7.0" width="8.6" height="1" fill="#2b2b2b"/><path d="M0.6 11.1L1.9 12.5L4.3 9.5" fill="none" stroke="#4caf50" stroke-width="0.9" stroke-dasharray="1 0.5"/><rect x="6" y="11.0" width="8.6" height="1" fill="#2b2b2b"/></svg>
<svg class="a" style="left:651.3px;top:116.89999999999999px" width="14" height="14" viewBox="0 0 14 14"><path d="M0.6 1.8C0.6 0.2 9.8 0.2 9.8 1.8L6.5 6.2V11.6L4.1 10.4V6.2Z" fill="#e6e6e6" stroke="#c9c9c9" stroke-width="0.8"/><ellipse cx="5.2" cy="1.8" rx="4.2" ry="1.1" fill="#f6f6f6" stroke="#cfcfcf" stroke-width="0.5"/><path d="M6.9 6.9L11.6 12.4M11.6 6.9L6.9 12.4" stroke="#a2a2a2" stroke-width="1.25" fill="none"/></svg>
<div class="slb " style="left:535px;top:136.3px;width:131px;letter-spacing:-0.15px;">2024</div>
<div class="slb " style="left:535px;top:159.2px;width:131px;letter-spacing:-0.15px;">2025</div>
<div class="sl" style="left:672.3px;top:28.3px;width:271.30000000000007px;height:178.0px"></div>
<div class="slt" style="left:679.3px;top:32.0px">Chart of accounts</div>
<div class="a" style="left:679px;top:49.8px;width:256.5px;height:1px;background:#4472c4"></div>
<svg class="a" style="left:897.6px;top:32px" width="16" height="14" viewBox="0 0 16 14"><path d="M0.6 3.1L1.9 4.5L4.3 1.5" fill="none" stroke="#4caf50" stroke-width="0.9" stroke-dasharray="1 0.5"/><rect x="6" y="3.0" width="8.6" height="1" fill="#8a8a8a"/><path d="M0.6 7.1L1.9 8.5L4.3 5.5" fill="none" stroke="#4caf50" stroke-width="0.9" stroke-dasharray="1 0.5"/><rect x="6" y="7.0" width="8.6" height="1" fill="#2b2b2b"/><path d="M0.6 11.1L1.9 12.5L4.3 9.5" fill="none" stroke="#4caf50" stroke-width="0.9" stroke-dasharray="1 0.5"/><rect x="6" y="11.0" width="8.6" height="1" fill="#2b2b2b"/></svg>
<svg class="a" style="left:922.4px;top:33.9px" width="14" height="14" viewBox="0 0 14 14"><path d="M0.6 1.8C0.6 0.2 9.8 0.2 9.8 1.8L6.5 6.2V11.6L4.1 10.4V6.2Z" fill="#e6e6e6" stroke="#c9c9c9" stroke-width="0.8"/><ellipse cx="5.2" cy="1.8" rx="4.2" ry="1.1" fill="#f6f6f6" stroke="#cfcfcf" stroke-width="0.5"/><path d="M6.9 6.9L11.6 12.4M11.6 6.9L6.9 12.4" stroke="#a2a2a2" stroke-width="1.25" fill="none"/></svg>
<div class="a" style="left:673.3px;top:51px;width:262px;height:149.8px;overflow:hidden">
<div class="slb slg" style="left:5.7000000000000455px;top:2.3px;width:120.6px;letter-spacing:-0.06px;">Abroad cost of<span style="letter-spacing:-1.2px">...</span></div>
<div class="slb slg" style="left:128.9000000000001px;top:2.3px;width:120.6px;letter-spacing:-0.21px;">Advertising <span style="margin-left:1.2px"></span>Costs<span style="letter-spacing:-1.2px">...</span></div>
<div class="slb slg" style="left:5.7000000000000455px;top:25.3px;width:120.6px;letter-spacing:-0.21px;">Advertising <span style="margin-left:1.2px"></span>Costs<span style="letter-spacing:-1.2px">...</span></div>
<div class="slb slg" style="left:128.9000000000001px;top:25.3px;width:120.6px;letter-spacing:0.11px;">Amortization of<span style="letter-spacing:-1.2px">...</span></div>
<div class="slb slg" style="left:5.7000000000000455px;top:48.3px;width:120.6px;letter-spacing:0.11px;">Amortization of<span style="letter-spacing:-1.2px">...</span></div>
<div class="slb slg" style="left:128.9000000000001px;top:48.3px;width:120.6px;letter-spacing:-0.52px;">Bank Fees</div>
<div class="slb slg" style="left:5.7000000000000455px;top:71.3px;width:120.6px;letter-spacing:-0.39px;">Bonuses</div>
<div class="slb slg" style="left:128.9000000000001px;top:71.3px;width:120.6px;letter-spacing:-0.03px;">Building Maintenance</div>
<div class="slb slg" style="left:5.7000000000000455px;top:94.3px;width:120.6px;letter-spacing:-0.29px;">Capital Gains</div>
<div class="slb slg" style="left:128.9000000000001px;top:94.3px;width:120.6px;letter-spacing:-0.31px;">Chemicals goods</div>
<div class="slb slg" style="left:5.7000000000000455px;top:117.3px;width:120.6px;letter-spacing:-0.32px;">Chemicals services</div>
<div class="slb slg" style="left:128.9000000000001px;top:117.3px;width:120.6px;letter-spacing:-0.40px;">Cloud <span style="margin-left:1.2px"></span>Service Fees</div>
<div class="slb slg" style="left:5.7000000000000455px;top:140.3px;width:120.6px;letter-spacing:-0.29px;height:8.2px;line-height:7.6px;overflow:visible;">Coatings</div>
<div class="slb slg" style="left:128.9000000000001px;top:140.3px;width:120.6px;letter-spacing:-0.02px;height:8.2px;line-height:7.6px;overflow:visible;">Communication<span style="letter-spacing:-1.2px">...</span></div>
</div>
<div class="a" style="left:942.9px;top:28.3px;width:1.6px;height:178px;background:#4472c4"></div>
<div class="a" style="left:927px;top:53.4px;width:7.8px;height:22.2px;border-radius:4px;background:#b3b3b3"></div>
<div class="a" style="left:515px;top:216px;width:440px;height:108.8px;background:#fff;border:1px solid #4472c4"></div>
<div class="slt" style="left:521px;top:220.8px">Date</div>
<div class="a" style="left:521px;top:238px;width:430px;height:1px;background:#4472c4"></div>
<div class="pt" style="left:521px;top:243px;font-size:9px;line-height:12px;color:#2f5597">All Periods</div>
<div class="pt" style="left:521.8px;top:261px;font-size:8.6px;line-height:12px;color:#828282;letter-spacing:0.3px">2024</div>
<div class="pt" style="left:625.1px;top:261px;font-size:8.6px;line-height:12px;color:#828282;letter-spacing:0.3px">2025</div>
<div class="pt" style="left:728.4px;top:261px;font-size:8.6px;line-height:12px;color:#828282;letter-spacing:0.3px">2026</div>
<div class="pt" style="left:521.6px;top:277px;font-size:8.8px;line-height:12px;color:#828282;letter-spacing:-0.2px">Q1</div>
<div class="pt" style="left:547.4px;top:277px;font-size:8.8px;line-height:12px;color:#828282;letter-spacing:-0.2px">Q2</div>
<div class="pt" style="left:573.3px;top:277px;font-size:8.8px;line-height:12px;color:#828282;letter-spacing:-0.2px">Q3</div>
<div class="pt" style="left:599.1px;top:277px;font-size:8.8px;line-height:12px;color:#828282;letter-spacing:-0.2px">Q4</div>
<div class="pt" style="left:624.9px;top:277px;font-size:8.8px;line-height:12px;color:#828282;letter-spacing:-0.2px">Q1</div>
<div class="pt" style="left:650.8px;top:277px;font-size:8.8px;line-height:12px;color:#828282;letter-spacing:-0.2px">Q2</div>
<div class="pt" style="left:676.6px;top:277px;font-size:8.8px;line-height:12px;color:#828282;letter-spacing:-0.2px">Q3</div>
<div class="pt" style="left:702.4px;top:277px;font-size:8.8px;line-height:12px;color:#828282;letter-spacing:-0.2px">Q4</div>
<div class="pt" style="left:728.2px;top:277px;font-size:8.8px;line-height:12px;color:#828282;letter-spacing:-0.2px">Q1</div>
<div class="pt" style="left:754.1px;top:277px;font-size:8.8px;line-height:12px;color:#828282;letter-spacing:-0.2px">Q2</div>
<div class="pt" style="left:779.9px;top:277px;font-size:8.8px;line-height:12px;color:#828282;letter-spacing:-0.2px">Q3</div>
<div class="pt" style="left:805.7px;top:277px;font-size:8.8px;line-height:12px;color:#828282;letter-spacing:-0.2px">Q4</div>
<div class="a" style="left:521px;top:291px;width:310px;height:13px;background:linear-gradient(#9db5e3 0%,#8aa7dd 40%,#5c85cf 75%,#3f6fc4 100%)"></div>
<div class="a" style="left:545.6px;top:291px;width:1px;height:13px;background:#c9d7f0;opacity:.55"></div>
<div class="a" style="left:571.5px;top:291px;width:1px;height:13px;background:#c9d7f0;opacity:.55"></div>
<div class="a" style="left:597.3px;top:291px;width:1px;height:13px;background:#c9d7f0;opacity:.55"></div>
<div class="a" style="left:623.1px;top:291px;width:1px;height:13px;background:#c9d7f0;opacity:.55"></div>
<div class="a" style="left:648.9px;top:291px;width:1px;height:13px;background:#c9d7f0;opacity:.55"></div>
<div class="a" style="left:674.8px;top:291px;width:1px;height:13px;background:#c9d7f0;opacity:.55"></div>
<div class="a" style="left:700.6px;top:291px;width:1px;height:13px;background:#c9d7f0;opacity:.55"></div>
<div class="a" style="left:726.4px;top:291px;width:1px;height:13px;background:#c9d7f0;opacity:.55"></div>
<div class="a" style="left:752.3px;top:291px;width:1px;height:13px;background:#c9d7f0;opacity:.55"></div>
<div class="a" style="left:778.1px;top:291px;width:1px;height:13px;background:#c9d7f0;opacity:.55"></div>
<div class="a" style="left:803.9px;top:291px;width:1px;height:13px;background:#c9d7f0;opacity:.55"></div>
<div class="a" style="left:521px;top:310px;width:430px;height:5px;background:#d9e2f3"></div>
<div class="a" style="left:497.4px;top:376.4px;width:359.6px;height:220.20000000000005px;background:#fff;border:1px solid #d9d9d9"></div>
<svg class="a" style="left:0;top:0" width="945" height="660" viewBox="0 0 945 660" font-family="Liberation Sans, sans-serif"><line x1="531.5" x2="804.5" y1="457.30" y2="457.30" stroke="#d9d9d9" stroke-width="0.9"/><text x="523.6" y="460.20" font-size="8.3" fill="#535353" text-anchor="end">0</text><line x1="531.5" x2="804.5" y1="448.43" y2="448.43" stroke="#d9d9d9" stroke-width="0.9"/><text x="523.6" y="451.32" font-size="8.3" fill="#535353" text-anchor="end">1.000</text><line x1="531.5" x2="804.5" y1="439.55" y2="439.55" stroke="#d9d9d9" stroke-width="0.9"/><text x="523.6" y="442.45" font-size="8.3" fill="#535353" text-anchor="end">2.000</text><line x1="531.5" x2="804.5" y1="430.68" y2="430.68" stroke="#d9d9d9" stroke-width="0.9"/><text x="523.6" y="433.57" font-size="8.3" fill="#535353" text-anchor="end">3.000</text><line x1="531.5" x2="804.5" y1="421.80" y2="421.80" stroke="#d9d9d9" stroke-width="0.9"/><text x="523.6" y="424.70" font-size="8.3" fill="#535353" text-anchor="end">4.000</text><line x1="531.5" x2="804.5" y1="412.93" y2="412.93" stroke="#d9d9d9" stroke-width="0.9"/><text x="523.6" y="415.82" font-size="8.3" fill="#535353" text-anchor="end">5.000</text><line x1="531.5" x2="804.5" y1="404.05" y2="404.05" stroke="#d9d9d9" stroke-width="0.9"/><text x="523.6" y="406.95" font-size="8.3" fill="#535353" text-anchor="end">6.000</text><line x1="531.5" x2="804.5" y1="395.18" y2="395.18" stroke="#d9d9d9" stroke-width="0.9"/><text x="523.6" y="398.07" font-size="8.3" fill="#535353" text-anchor="end">7.000</text><line x1="531.5" x2="804.5" y1="386.30" y2="386.30" stroke="#d9d9d9" stroke-width="0.9"/><text x="523.6" y="389.20" font-size="8.3" fill="#535353" text-anchor="end">8.000</text><rect x="533.0" y="443.99" width="1.05" height="13.31" fill="#4472c4"/><rect x="534.0" y="443.99" width="1.05" height="13.31" fill="#ed7d31"/><rect x="535.5" y="443.99" width="1.05" height="13.31" fill="#a5a5a5"/><rect x="537.0" y="443.99" width="1.05" height="13.31" fill="#ffc000"/><rect x="540.0" y="443.99" width="1.05" height="13.31" fill="#4472c4"/><rect x="541.5" y="443.99" width="1.05" height="13.31" fill="#ed7d31"/><rect x="542.5" y="443.99" width="1.05" height="13.31" fill="#a5a5a5"/><rect x="544.0" y="443.99" width="1.05" height="13.31" fill="#ffc000"/><rect x="547.5" y="443.99" width="1.05" height="13.31" fill="#4472c4"/><rect x="548.5" y="443.99" width="1.05" height="13.31" fill="#ed7d31"/><rect x="550.0" y="443.99" width="1.05" height="13.31" fill="#a5a5a5"/><rect x="551.0" y="443.99" width="1.05" height="13.31" fill="#ffc000"/><rect x="554.5" y="451.98" width="1.05" height="5.33" fill="#4472c4"/><rect x="556.0" y="451.98" width="1.05" height="5.33" fill="#ed7d31"/><rect x="557.0" y="451.98" width="1.05" height="5.33" fill="#a5a5a5"/><rect x="558.5" y="451.98" width="1.05" height="5.33" fill="#ffc000"/><rect x="561.5" y="443.99" width="1.05" height="13.31" fill="#4472c4"/><rect x="563.0" y="443.99" width="1.05" height="13.31" fill="#ed7d31"/><rect x="564.0" y="443.99" width="1.05" height="13.31" fill="#a5a5a5"/><rect x="565.5" y="443.99" width="1.05" height="13.31" fill="#ffc000"/><rect x="569.0" y="443.99" width="1.05" height="13.31" fill="#4472c4"/><rect x="570.0" y="443.99" width="1.05" height="13.31" fill="#ed7d31"/><rect x="571.5" y="443.99" width="1.05" height="13.31" fill="#a5a5a5"/><rect x="572.5" y="443.99" width="1.05" height="13.31" fill="#ffc000"/><rect x="576.0" y="443.99" width="1.05" height="13.31" fill="#4472c4"/><rect x="577.5" y="443.99" width="1.05" height="13.31" fill="#ed7d31"/><rect x="578.5" y="443.99" width="1.05" height="13.31" fill="#a5a5a5"/><rect x="580.0" y="443.99" width="1.05" height="13.31" fill="#ffc000"/><rect x="583.0" y="443.99" width="1.05" height="13.31" fill="#4472c4"/><rect x="584.5" y="443.99" width="1.05" height="13.31" fill="#ed7d31"/><rect x="586.0" y="443.99" width="1.05" height="13.31" fill="#a5a5a5"/><rect x="587.0" y="443.99" width="1.05" height="13.31" fill="#ffc000"/><rect x="590.5" y="443.99" width="1.05" height="13.31" fill="#4472c4"/><rect x="591.5" y="443.99" width="1.05" height="13.31" fill="#ed7d31"/><rect x="593.0" y="443.99" width="1.05" height="13.31" fill="#a5a5a5"/><rect x="594.0" y="443.99" width="1.05" height="13.31" fill="#ffc000"/><rect x="597.5" y="443.99" width="1.05" height="13.31" fill="#4472c4"/><rect x="599.0" y="443.99" width="1.05" height="13.31" fill="#ed7d31"/><rect x="600.0" y="443.99" width="1.05" height="13.31" fill="#a5a5a5"/><rect x="601.5" y="443.99" width="1.05" height="13.31" fill="#ffc000"/><rect x="605.0" y="443.99" width="1.05" height="13.31" fill="#4472c4"/><rect x="606.0" y="443.99" width="1.05" height="13.31" fill="#ed7d31"/><rect x="607.5" y="443.99" width="1.05" height="13.31" fill="#a5a5a5"/><rect x="608.5" y="443.99" width="1.05" height="13.31" fill="#ffc000"/><rect x="612.0" y="443.99" width="1.05" height="13.31" fill="#4472c4"/><rect x="613.0" y="443.99" width="1.05" height="13.31" fill="#ed7d31"/><rect x="614.5" y="443.99" width="1.05" height="13.31" fill="#a5a5a5"/><rect x="616.0" y="443.99" width="1.05" height="13.31" fill="#ffc000"/><rect x="619.0" y="443.99" width="1.05" height="13.31" fill="#4472c4"/><rect x="620.5" y="443.99" width="1.05" height="13.31" fill="#ed7d31"/><rect x="621.5" y="443.99" width="1.05" height="13.31" fill="#a5a5a5"/><rect x="623.0" y="443.99" width="1.05" height="13.31" fill="#ffc000"/><rect x="626.5" y="443.99" width="1.05" height="13.31" fill="#4472c4"/><rect x="627.5" y="443.99" width="1.05" height="13.31" fill="#ed7d31"/><rect x="629.0" y="443.99" width="1.05" height="13.31" fill="#a5a5a5"/><rect x="630.0" y="443.99" width="1.05" height="13.31" fill="#ffc000"/><rect x="633.5" y="443.99" width="1.05" height="13.31" fill="#4472c4"/><rect x="635.0" y="443.99" width="1.05" height="13.31" fill="#ed7d31"/><rect x="636.0" y="443.99" width="1.05" height="13.31" fill="#a5a5a5"/><rect x="637.5" y="443.99" width="1.05" height="13.31" fill="#ffc000"/><rect x="640.5" y="443.99" width="1.05" height="13.31" fill="#4472c4"/><rect x="642.0" y="443.99" width="1.05" height="13.31" fill="#ed7d31"/><rect x="643.5" y="443.99" width="1.05" height="13.31" fill="#a5a5a5"/><rect x="644.5" y="443.99" width="1.05" height="13.31" fill="#ffc000"/><rect x="648.0" y="451.98" width="1.05" height="5.33" fill="#4472c4"/><rect x="649.0" y="451.98" width="1.05" height="5.33" fill="#ed7d31"/><rect x="650.5" y="451.98" width="1.05" height="5.33" fill="#a5a5a5"/><rect x="651.5" y="451.98" width="1.05" height="5.33" fill="#ffc000"/><rect x="655.0" y="443.99" width="1.05" height="13.31" fill="#4472c4"/><rect x="656.5" y="443.99" width="1.05" height="13.31" fill="#ed7d31"/><rect x="657.5" y="443.99" width="1.05" height="13.31" fill="#a5a5a5"/><rect x="659.0" y="443.99" width="1.05" height="13.31" fill="#ffc000"/><rect x="662.5" y="443.99" width="1.05" height="13.31" fill="#4472c4"/><rect x="663.5" y="443.99" width="1.05" height="13.31" fill="#ed7d31"/><rect x="665.0" y="443.99" width="1.05" height="13.31" fill="#a5a5a5"/><rect x="666.0" y="443.99" width="1.05" height="13.31" fill="#ffc000"/><rect x="669.5" y="443.99" width="1.05" height="13.31" fill="#4472c4"/><rect x="670.5" y="443.99" width="1.05" height="13.31" fill="#ed7d31"/><rect x="672.0" y="443.99" width="1.05" height="13.31" fill="#a5a5a5"/><rect x="673.5" y="443.99" width="1.05" height="13.31" fill="#ffc000"/><rect x="676.5" y="443.99" width="1.05" height="13.31" fill="#4472c4"/><rect x="678.0" y="443.99" width="1.05" height="13.31" fill="#ed7d31"/><rect x="679.0" y="443.99" width="1.05" height="13.31" fill="#a5a5a5"/><rect x="680.5" y="443.99" width="1.05" height="13.31" fill="#ffc000"/><rect x="684.0" y="443.99" width="1.05" height="13.31" fill="#4472c4"/><rect x="685.0" y="443.99" width="1.05" height="13.31" fill="#ed7d31"/><rect x="686.5" y="443.99" width="1.05" height="13.31" fill="#a5a5a5"/><rect x="687.5" y="443.99" width="1.05" height="13.31" fill="#ffc000"/><rect x="691.0" y="443.99" width="1.05" height="13.31" fill="#4472c4"/><rect x="692.5" y="443.99" width="1.05" height="13.31" fill="#ed7d31"/><rect x="693.5" y="443.99" width="1.05" height="13.31" fill="#a5a5a5"/><rect x="695.0" y="443.99" width="1.05" height="13.31" fill="#ffc000"/><rect x="698.0" y="443.99" width="1.05" height="13.31" fill="#4472c4"/><rect x="699.5" y="443.99" width="1.05" height="13.31" fill="#ed7d31"/><rect x="700.5" y="443.99" width="1.05" height="13.31" fill="#a5a5a5"/><rect x="702.0" y="443.99" width="1.05" height="13.31" fill="#ffc000"/><rect x="705.5" y="443.99" width="1.05" height="13.31" fill="#4472c4"/><rect x="706.5" y="443.99" width="1.05" height="13.31" fill="#ed7d31"/><rect x="708.0" y="443.99" width="1.05" height="13.31" fill="#a5a5a5"/><rect x="709.0" y="443.99" width="1.05" height="13.31" fill="#ffc000"/><rect x="712.5" y="443.99" width="1.05" height="13.31" fill="#4472c4"/><rect x="714.0" y="443.99" width="1.05" height="13.31" fill="#ed7d31"/><rect x="715.0" y="443.99" width="1.05" height="13.31" fill="#a5a5a5"/><rect x="716.5" y="443.99" width="1.05" height="13.31" fill="#ffc000"/><rect x="719.5" y="420.03" width="1.05" height="37.27" fill="#4472c4"/><rect x="721.0" y="420.03" width="1.05" height="37.27" fill="#ed7d31"/><rect x="722.5" y="420.03" width="1.05" height="37.27" fill="#a5a5a5"/><rect x="723.5" y="420.03" width="1.05" height="37.27" fill="#ffc000"/><rect x="727.0" y="420.03" width="1.05" height="37.27" fill="#4472c4"/><rect x="728.0" y="420.03" width="1.05" height="37.27" fill="#ed7d31"/><rect x="729.5" y="420.03" width="1.05" height="37.27" fill="#a5a5a5"/><rect x="730.5" y="420.03" width="1.05" height="37.27" fill="#ffc000"/><rect x="734.0" y="390.74" width="1.05" height="66.56" fill="#4472c4"/><rect x="735.5" y="390.74" width="1.05" height="66.56" fill="#ed7d31"/><rect x="736.5" y="390.74" width="1.05" height="66.56" fill="#a5a5a5"/><rect x="738.0" y="390.74" width="1.05" height="66.56" fill="#ffc000"/><rect x="741.5" y="420.03" width="1.05" height="37.27" fill="#4472c4"/><rect x="742.5" y="420.03" width="1.05" height="37.27" fill="#ed7d31"/><rect x="744.0" y="420.03" width="1.05" height="37.27" fill="#a5a5a5"/><rect x="745.0" y="420.03" width="1.05" height="37.27" fill="#ffc000"/><rect x="748.5" y="443.99" width="1.05" height="13.31" fill="#4472c4"/><rect x="749.5" y="443.99" width="1.05" height="13.31" fill="#ed7d31"/><rect x="751.0" y="443.99" width="1.05" height="13.31" fill="#a5a5a5"/><rect x="752.5" y="443.99" width="1.05" height="13.31" fill="#ffc000"/><rect x="755.5" y="420.03" width="1.05" height="37.27" fill="#4472c4"/><rect x="757.0" y="420.03" width="1.05" height="37.27" fill="#ed7d31"/><rect x="758.0" y="420.03" width="1.05" height="37.27" fill="#a5a5a5"/><rect x="759.5" y="420.03" width="1.05" height="37.27" fill="#ffc000"/><rect x="763.0" y="420.03" width="1.05" height="37.27" fill="#4472c4"/><rect x="764.0" y="420.03" width="1.05" height="37.27" fill="#ed7d31"/><rect x="765.5" y="420.03" width="1.05" height="37.27" fill="#a5a5a5"/><rect x="766.5" y="420.03" width="1.05" height="37.27" fill="#ffc000"/><rect x="770.0" y="420.03" width="1.05" height="37.27" fill="#4472c4"/><rect x="771.5" y="420.03" width="1.05" height="37.27" fill="#ed7d31"/><rect x="772.5" y="420.03" width="1.05" height="37.27" fill="#a5a5a5"/><rect x="774.0" y="420.03" width="1.05" height="37.27" fill="#ffc000"/><rect x="777.0" y="390.74" width="1.05" height="66.56" fill="#4472c4"/><rect x="778.5" y="390.74" width="1.05" height="66.56" fill="#ed7d31"/><rect x="780.0" y="390.74" width="1.05" height="66.56" fill="#a5a5a5"/><rect x="781.0" y="390.74" width="1.05" height="66.56" fill="#ffc000"/><rect x="784.5" y="420.03" width="1.05" height="37.27" fill="#4472c4"/><rect x="785.5" y="420.03" width="1.05" height="37.27" fill="#ed7d31"/><rect x="787.0" y="420.03" width="1.05" height="37.27" fill="#a5a5a5"/><rect x="788.0" y="420.03" width="1.05" height="37.27" fill="#ffc000"/><rect x="791.5" y="443.99" width="1.05" height="13.31" fill="#4472c4"/><rect x="793.0" y="443.99" width="1.05" height="13.31" fill="#ed7d31"/><rect x="794.0" y="443.99" width="1.05" height="13.31" fill="#a5a5a5"/><rect x="795.5" y="443.99" width="1.05" height="13.31" fill="#ffc000"/><rect x="799.0" y="420.03" width="1.05" height="37.27" fill="#4472c4"/><rect x="800.0" y="420.03" width="1.05" height="37.27" fill="#ed7d31"/><rect x="801.5" y="420.03" width="1.05" height="37.27" fill="#a5a5a5"/><rect x="802.5" y="420.03" width="1.05" height="37.27" fill="#ffc000"/><text transform="translate(538.99,462.70) rotate(-90)" font-size="8.3" fill="#535353" text-anchor="end" textLength="75.9" lengthAdjust="spacing">Cost of Sales (COGS)</text><text transform="translate(553.36,462.70) rotate(-90)" font-size="8.3" fill="#535353" text-anchor="end" textLength="91.3" lengthAdjust="spacing">Distribution &amp; Transport</text><text transform="translate(567.73,457.60) rotate(-90)" font-size="8.3" fill="#535353" text-anchor="end" textLength="83.0" lengthAdjust="spacing">Interest and financial...</text><text transform="translate(582.10,457.60) rotate(-90)" font-size="8.3" fill="#535353" text-anchor="end" textLength="75.6" lengthAdjust="spacing">Office Supplies and...</text><text transform="translate(596.47,462.70) rotate(-90)" font-size="8.3" fill="#535353" text-anchor="end" textLength="25.6" lengthAdjust="spacing">Payroll</text><text transform="translate(610.83,462.70) rotate(-90)" font-size="8.3" fill="#535353" text-anchor="end" textLength="95.1" lengthAdjust="spacing">Research &amp; Development</text><text transform="translate(625.20,462.70) rotate(-90)" font-size="8.3" fill="#535353" text-anchor="end" textLength="83.0" lengthAdjust="spacing">Software and Licenses</text><text transform="translate(639.57,457.60) rotate(-90)" font-size="8.3" fill="#535353" text-anchor="end" textLength="68.3" lengthAdjust="spacing">Depreciation and...</text><text transform="translate(653.94,462.70) rotate(-90)" font-size="8.3" fill="#535353" text-anchor="end" textLength="42.8" lengthAdjust="spacing">Income Tax</text><text transform="translate(668.31,462.70) rotate(-90)" font-size="8.3" fill="#535353" text-anchor="end" textLength="95.5" lengthAdjust="spacing">Maintainance and repairs</text><text transform="translate(682.68,462.70) rotate(-90)" font-size="8.3" fill="#535353" text-anchor="end" textLength="58.5" lengthAdjust="spacing">Other expenses</text><text transform="translate(697.04,462.70) rotate(-90)" font-size="8.3" fill="#535353" text-anchor="end" textLength="17.5" lengthAdjust="spacing">Rent</text><text transform="translate(711.41,462.70) rotate(-90)" font-size="8.3" fill="#535353" text-anchor="end" textLength="68.0" lengthAdjust="spacing">Sales &amp; Marketing</text><text transform="translate(725.78,462.70) rotate(-90)" font-size="8.3" fill="#535353" text-anchor="end" textLength="37.8" lengthAdjust="spacing">Chemicals</text><text transform="translate(740.15,462.70) rotate(-90)" font-size="8.3" fill="#535353" text-anchor="end" textLength="67.6" lengthAdjust="spacing">Financial Revenue</text><text transform="translate(754.52,462.70) rotate(-90)" font-size="8.3" fill="#535353" text-anchor="end" textLength="42.8" lengthAdjust="spacing">Income Tax</text><text transform="translate(768.89,462.70) rotate(-90)" font-size="8.3" fill="#535353" text-anchor="end" textLength="37.8" lengthAdjust="spacing">Chemicals</text><text transform="translate(783.26,462.70) rotate(-90)" font-size="8.3" fill="#535353" text-anchor="end" textLength="67.6" lengthAdjust="spacing">Financial Revenue</text><text transform="translate(797.62,462.70) rotate(-90)" font-size="8.3" fill="#535353" text-anchor="end" textLength="42.8" lengthAdjust="spacing">Income Tax</text><line x1="531.50" x2="531.50" y1="457.3" y2="592.5" stroke="#d9d9d9" stroke-width="0.9"/><line x1="718.29" x2="718.29" y1="457.3" y2="592.5" stroke="#d9d9d9" stroke-width="0.9"/><line x1="804.50" x2="804.50" y1="457.3" y2="592.5" stroke="#d9d9d9" stroke-width="0.9"/><line x1="624.89" x2="624.89" y1="457.3" y2="574.5" stroke="#d9d9d9" stroke-width="0.9"/><line x1="761.39" x2="761.39" y1="457.3" y2="574.5" stroke="#d9d9d9" stroke-width="0.9"/><text x="578.20" y="572.2" font-size="8.3" fill="#535353" text-anchor="middle">2024</text><text x="671.59" y="572.2" font-size="8.3" fill="#535353" text-anchor="middle">2025</text><text x="739.84" y="572.2" font-size="8.3" fill="#535353" text-anchor="middle">2024</text><text x="782.95" y="572.2" font-size="8.3" fill="#535353" text-anchor="middle">2025</text><text x="624.89" y="590" font-size="8.3" fill="#535353" text-anchor="middle">Cost</text><text x="761.39" y="590" font-size="8.3" fill="#535353" text-anchor="middle">Revenue</text><rect x="821.1" y="458.50" width="4.7" height="4.7" fill="#4472c4"/><text x="827.6" y="463.70" font-size="8.3" fill="#535353">Qtr1</text><rect x="821.1" y="475.60" width="4.7" height="4.7" fill="#ed7d31"/><text x="827.6" y="480.80" font-size="8.3" fill="#535353">Qtr2</text><rect x="821.1" y="492.70" width="4.7" height="4.7" fill="#a5a5a5"/><text x="827.6" y="497.90" font-size="8.3" fill="#535353">Qtr3</text><rect x="821.1" y="509.80" width="4.7" height="4.7" fill="#ffc000"/><text x="827.6" y="515.00" font-size="8.3" fill="#535353">Qtr4</text></svg>
<div class="a" style="left:21px;top:647.2px;width:511px;height:9.6px;border-radius:5px;background:rgba(125,125,125,0.72)"></div>
</div>
<div class="a" style="left:0;top:660px;width:945px;height:24px;background:#efefef;border-top:1px solid #d0d0d0"></div>
<svg class="a" style="left:9px;top:667px" width="40" height="14" viewBox="0 0 40 14"><path d="M9 2.2V11.4L2.8 6.8Z" fill="#b4b4b4"/><path d="M25.2 2.2V11.4L31.4 6.8Z" fill="#b4b4b4"/></svg>
<div class="a" style="left:56px;top:663px;width:1px;height:21px;background:#d6d6d6"></div>
<div class="a" style="left:358px;top:663px;width:1px;height:21px;background:#d6d6d6"></div>
<div class="a" style="left:395px;top:663px;width:1px;height:21px;background:#d6d6d6"></div>
<div class="a" style="left:60px;top:663px;width:117.2px;height:19.2px;background:#ff0019;color:#fff;font-size:12.4px;line-height:20.6px;text-align:center;white-space:nowrap;letter-spacing:-0.1px;">Database_MoM</div>
<div class="a" style="left:263px;top:663px;width:91px;height:19.2px;background:#ff0019;color:#fff;font-size:12.4px;line-height:20.6px;text-align:center;white-space:nowrap;letter-spacing:-0.1px;">Revenue_Q</div>
<div class="a" style="left:181px;top:660px;width:78px;height:21.6px;background:#fafafa;border:1px solid #cfcfcf;border-top:none;border-radius:0 0 3px 3px;box-shadow:0 1px 1.5px rgba(0,0,0,.28)"></div>
<div class="a" style="left:184px;top:663px;width:72px;height:16.2px;overflow:visible;background:linear-gradient(#ffe3e5 0%,#ffc9cd 35%,#fc9aa0 72%,#f9858d 100%);color:#1e7145;font-weight:bold;font-size:12.4px;line-height:20.6px;text-align:center;white-space:nowrap;letter-spacing:-0.1px;">Slicer</div>
<div class="a" style="left:368px;top:661.4px;width:18px;height:22px;font-size:19.5px;line-height:22px;color:#454545;text-align:center;-webkit-text-stroke:0.45px #454545">+</div>
<div class="a" id="pane" style="left:944.5px;top:0;width:301.5px;height:684px;background:#ececec;border-left:1px solid #e2e2e2"></div>
<div class="pt" style="left:961px;top:3.5px;font-size:14.7px;line-height:20px;color:#1d1d1d;letter-spacing:0.36px;-webkit-text-stroke:0.35px #1d1d1d">PivotTable Fields</div>
<svg class="a" style="left:1214.5px;top:6.5px" width="15" height="15" viewBox="0 0 15 15"><circle cx="7.5" cy="7.5" r="7" fill="#6a6a6a"/><path d="M4.9 4.9L10.1 10.1M10.1 4.9L4.9 10.1" stroke="#ececec" stroke-width="1.5" stroke-linecap="round"/></svg>
<div class="pt" style="left:959.5px;top:49px;font-size:12.6px;line-height:16px;font-weight:bold;color:#b3b3b3;letter-spacing:0.25px">FIELD NAME</div>
<div class="a" style="left:1099.5px;top:48px;width:140px;height:18px;background:#fff;border:1px solid #cbcbcb;border-radius:4.5px"></div>
<svg class="a" style="left:1107px;top:51px" width="13" height="13" viewBox="0 0 13 13"><circle cx="5" cy="5" r="3.7" fill="none" stroke="#4a4a4a" stroke-width="1.1"/><path d="M7.7 7.9L10.8 11.2" stroke="#4a4a4a" stroke-width="1.3" stroke-linecap="round"/></svg>
<div class="pt" style="left:1126.3px;top:48.7px;font-size:11.6px;line-height:15px;color:#b9b9b9;letter-spacing:0.12px">Search fields</div>
<div class="wb" style="left:950.5px;top:83.5px;width:289px;height:110.5px"></div>
<div class="cb" style="top:88.1px"></div>
<div class="fl" style="top:87.7px">Chart of accounts</div>
<div class="cb" style="top:110.0px"></div>
<div class="fl" style="top:109.6px">MoM</div>
<div class="cb cbk" style="top:132.0px"><svg class="a" style="left:0;top:0" width="14" height="14" viewBox="0 0 14 14"><path d="M3.4 7.3L6 10L10.4 3.7" fill="none" stroke="#fff" stroke-width="1.9" stroke-linecap="round" stroke-linejoin="round"/></svg></div>
<div class="fl" style="top:131.6px">Data for transfer</div>
<div class="cb" style="top:153.9px"></div>
<div class="fl" style="top:153.5px">Date</div>
<div class="cb cbk" style="top:175.8px"><svg class="a" style="left:0;top:0" width="14" height="14" viewBox="0 0 14 14"><path d="M3.4 7.3L6 10L10.4 3.7" fill="none" stroke="#fff" stroke-width="1.9" stroke-linecap="round" stroke-linejoin="round"/></svg></div>
<div class="fl" style="top:175.4px">Group of accounts</div>
<div class="a" style="left:1091.5px;top:204.2px;width:6px;height:6px;border-radius:50%;background:#d4d4d4"></div>
<svg class="a" style="left:954.5px;top:220.5px" width="16" height="16" viewBox="0 0 16 16"><ellipse cx="7.5" cy="3.3" rx="6" ry="2" fill="none" stroke="#4c4c4c" stroke-width="1.4"/><path d="M1.7 4.2L6.2 9V14.4H8.8V9L13.3 4.2Z" fill="#4c4c4c"/></svg>
<div class="pt" style="left:979.3px;top:219.5px;font-size:13.3px;line-height:18px;color:#303030;letter-spacing:0px;">Filters</div>
<svg class="a" style="left:1108px;top:223.3px" width="14" height="10" viewBox="0 0 14 10"><rect x="0" y="0" width="3" height="9.4" fill="#4c4c4c"/><rect x="5" y="0" width="3" height="9.4" fill="#4c4c4c"/><rect x="10" y="0" width="3" height="9.4" fill="#4c4c4c"/></svg>
<div class="pt" style="left:1132.3px;top:219.5px;font-size:13.3px;line-height:18px;color:#303030;letter-spacing:0px;">Columns</div>
<svg class="a" style="left:955.8px;top:441.2px" width="13" height="13" viewBox="0 0 13 13"><rect x="0" y="0" width="11.8" height="2.8" fill="#4c4c4c"/><rect x="0" y="4.9" width="11.8" height="2.8" fill="#4c4c4c"/><rect x="0" y="9.8" width="11.8" height="2.8" fill="#4c4c4c"/></svg>
<div class="pt" style="left:979.3px;top:439.5px;font-size:13.3px;line-height:18px;color:#303030;letter-spacing:0px;">Rows</div>
<div class="pt" style="left:1107.3px;top:436.3px;font-family:'Liberation Serif',serif;font-weight:bold;font-size:20px;line-height:24px;color:#4c4c4c;">&Sigma;</div>
<div class="pt" style="left:1131.5px;top:439.5px;font-size:13.3px;line-height:18px;color:#303030;letter-spacing:0px;">Values</div>
<div class="wb" style="left:950.5px;top:243.6px;width:137px;height:180.4px"></div>
<div class="wb" style="left:1103.5px;top:243.6px;width:136px;height:180.4px"></div>
<div class="wb" style="left:950.5px;top:465.8px;width:137px;height:181.3px"></div>
<div class="wb" style="left:1103px;top:465.8px;width:136.5px;height:181.3px"></div>
<div class="grip" style="left:963.8px;top:251.1px"></div><div class="grip" style="left:963.8px;top:256.2px"></div>
<div class="it" style="left:972.3px;top:247.9px">Belonging State...</div>
<div class="info" style="left:1066.8px;top:249.1px">i</div>
<div class="grip" style="left:1116.7px;top:251.1px"></div><div class="grip" style="left:1116.7px;top:256.2px"></div>
<div class="it" style="left:1125.4px;top:247.9px">Quarters</div>
<div class="info" style="left:1219px;top:249.1px">i</div>
<div class="grip" style="left:963.8px;top:473.0px"></div><div class="grip" style="left:963.8px;top:478.1px"></div>
<div class="it" style="left:972.3px;top:469.8px">Position</div>
<div class="info" style="left:1066.8px;top:471.0px">i</div>
<div class="grip" style="left:963.8px;top:494.9px"></div><div class="grip" style="left:963.8px;top:500.0px"></div>
<div class="it" style="left:972.3px;top:491.7px">Years</div>
<div class="info" style="left:1066.8px;top:492.9px">i</div>
<div class="grip" style="left:963.8px;top:516.8px"></div><div class="grip" style="left:963.8px;top:521.9px"></div>
<div class="it" style="left:972.3px;top:513.6px">Group of accou...</div>
<div class="info" style="left:1066.8px;top:514.8px">i</div>
<div class="grip" style="left:1115.5px;top:473.0px"></div><div class="grip" style="left:1115.5px;top:478.1px"></div>
<div class="it" style="left:1124.2px;top:469.8px">Sum of Data for...</div>
<div class="info" style="left:1219px;top:471.0px">i</div>
<div class="pt" style="left:945px;top:656.5px;width:300px;text-align:center;font-size:13.4px;line-height:16px;color:#bdbdbd;letter-spacing:0.12px">Drag fields between areas</div>
<div class="a" style="left:1244.5px;top:0;width:1.5px;height:684px;background:#c6c6c6"></div>
<div class="a" style="left:1244.5px;top:668px;width:1.5px;height:16px;background:#111"></div>
</div></body></html>
